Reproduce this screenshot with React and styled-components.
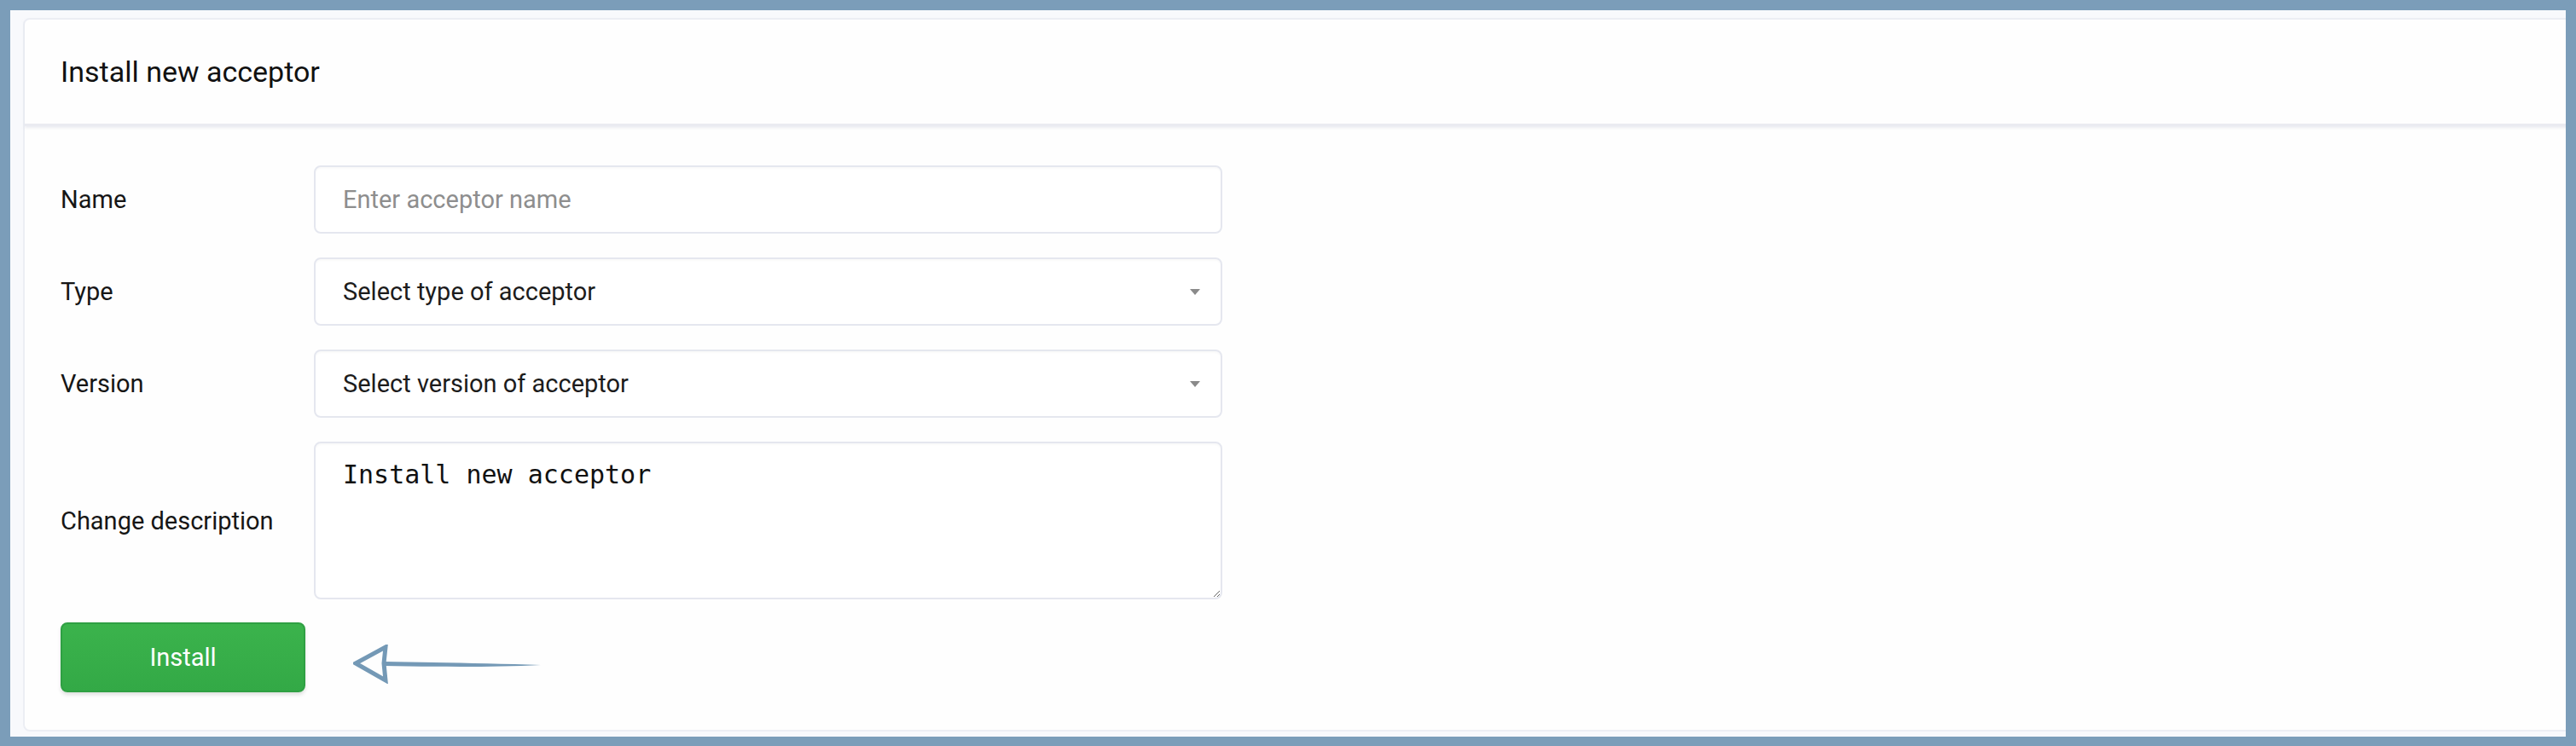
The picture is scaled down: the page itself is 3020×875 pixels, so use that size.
import React from "react";
import styled, { createGlobalStyle } from "styled-components";

const Global = createGlobalStyle`
  html, body {
    margin: 0;
    height: 100%;
  }
  body {
    background: #7b9db9;
    font-family: Roboto, "Liberation Sans", sans-serif;
  }
  #root {
    height: 100%;
  }
`;

const Frame = styled.div`
  box-sizing: border-box;
  margin: 12px 12px 0 12px;
  height: calc(100% - 23px);
  background: #f8f9fc;
  padding: 9px 0 6px 15px;
  overflow: hidden;
  display: flex;
  flex-direction: column;
`;

const Card = styled.div`
  flex: 1;
  margin-right: -12px;
  background: #fefefe;
  border: 2px solid #eceef4;
  border-radius: 8px;
  display: flex;
  flex-direction: column;
`;

const Header = styled.div`
  height: 125px;
  box-sizing: border-box;
  display: flex;
  align-items: center;
  padding-left: 42px;
  border-bottom: 3px solid #eaebf1;
  box-shadow: 0 2px 3px rgba(220, 222, 232, 0.5);
`;

const Title = styled.h1`
  margin: 0;
  font-size: 34px;
  font-weight: 400;
  color: #111;
`;

const Body = styled.div`
  padding: 46px 42px 0 42px;
  display: flex;
  flex-direction: column;
  gap: 28px;
`;

const Row = styled.div`
  display: flex;
  align-items: center;
`;

const Label = styled.label`
  width: 297px;
  flex-shrink: 0;
  font-size: 29px;
  color: #161616;
`;

const fieldBase = `
  box-sizing: border-box;
  width: 1065px;
  border: 2px solid #e5e7ef;
  border-radius: 8px;
  background: #fff;
  box-shadow: inset 0 2px 2px rgba(0, 0, 0, 0.025);
  outline: none;
`;

const TextInput = styled.input`
  ${fieldBase}
  height: 80px;
  padding: 0 32px;
  font-family: Roboto, "Liberation Sans", sans-serif;
  font-size: 29px;
  color: #222;
  &::placeholder {
    color: #8e8e8e;
  }
`;

const SelectWrap = styled.div`
  position: relative;
  &::after {
    content: "";
    position: absolute;
    right: 26px;
    top: 37px;
    border-left: 6px solid transparent;
    border-right: 6px solid transparent;
    border-top: 7px solid #8a8a8a;
  }
`;

const Select = styled.select`
  ${fieldBase}
  height: 80px;
  padding: 0 32px;
  appearance: none;
  font-family: Roboto, "Liberation Sans", sans-serif;
  font-size: 29px;
  color: #1c1c1c;
`;

const TextArea = styled.textarea`
  ${fieldBase}
  display: block;
  height: 185px;
  padding: 14px 32px;
  resize: vertical;
  font-family: "DejaVu Sans Mono", monospace;
  font-size: 30px;
  line-height: 1.5;
  color: #111;
`;

const Actions = styled.div`
  display: flex;
  align-items: center;
  gap: 56px;
  margin-top: -1px;
`;

const InstallButton = styled.button`
  width: 287px;
  height: 82px;
  border: 2px solid #2fa043;
  border-radius: 8px;
  background: linear-gradient(#3bb34c, #33a946);
  box-shadow: 0 3px 4px rgba(0, 0, 0, 0.12);
  color: #fff;
  font-family: Roboto, "Liberation Sans", sans-serif;
  font-size: 29px;
  cursor: pointer;
`;

const Arrow = () => (
  <svg width="222" height="46" viewBox="0 0 222 46" style={{ marginTop: 16 }}>
    <path
      d="M38 3 L3 22 L38 42 L36 22 Z"
      fill="none"
      stroke="#7499b6"
      strokeWidth="5"
      strokeLinejoin="miter"
    />
    <path
      d="M37 20 C 90 21, 160 22, 220 24 C 160 27, 90 26, 37 25 Z"
      fill="#7499b6"
    />
  </svg>
);

export default function App() {
  return (
    <>
      <Global />
      <Frame>
        <Card>
          <Header>
            <Title>Install new acceptor</Title>
          </Header>
          <Body>
            <Row>
              <Label>Name</Label>
              <TextInput placeholder="Enter acceptor name" />
            </Row>
            <Row>
              <Label>Type</Label>
              <SelectWrap>
                <Select defaultValue="">
                  <option value="">Select type of acceptor</option>
                </Select>
              </SelectWrap>
            </Row>
            <Row>
              <Label>Version</Label>
              <SelectWrap>
                <Select defaultValue="">
                  <option value="">Select version of acceptor</option>
                </Select>
              </SelectWrap>
            </Row>
            <Row>
              <Label>Change description</Label>
              <TextArea defaultValue="Install new acceptor" />
            </Row>
            <Actions>
              <InstallButton>Install</InstallButton>
              <Arrow />
            </Actions>
          </Body>
        </Card>
      </Frame>
    </>
  );
}
